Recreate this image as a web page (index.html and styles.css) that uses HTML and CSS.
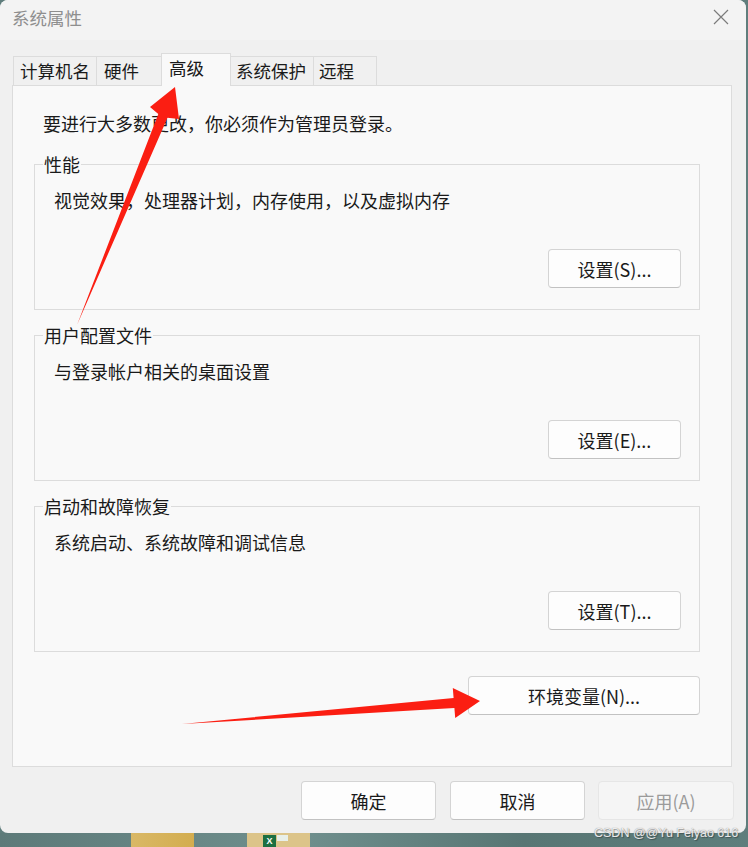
FILE: index.html
```html
<!DOCTYPE html>
<html lang="zh-CN">
<head>
<meta charset="utf-8">
<title>系统属性</title>
<link rel="stylesheet" href="styles.css">
</head>
<body>
<div class="window">
  <div class="titlebar">
    <span class="title">系统属性</span>
    <svg class="close" width="16" height="16" viewBox="0 0 16 16"><path d="M1 1 L15 15 M15 1 L1 15" stroke="#7b7b7b" stroke-width="1.2" fill="none"/></svg>
  </div>
  <div class="content">
    <div class="tabs">
      <div class="tab t1">计算机名</div>
      <div class="tab t2">硬件</div>
      <div class="tab t3 active">高级</div>
      <div class="tab t4">系统保护</div>
      <div class="tab t5">远程</div>
    </div>
    <div class="panel">
      <p class="intro">要进行大多数更改，你必须作为管理员登录。</p>
      <fieldset class="group">
        <legend>性能</legend>
        <p class="desc">视觉效果，处理器计划，内存使用，以及虚拟内存</p>
        <div class="row"><button class="btn set">设置(S)...</button></div>
      </fieldset>
      <fieldset class="group">
        <legend>用户配置文件</legend>
        <p class="desc">与登录帐户相关的桌面设置</p>
        <div class="row"><button class="btn set">设置(E)...</button></div>
      </fieldset>
      <fieldset class="group">
        <legend>启动和故障恢复</legend>
        <p class="desc">系统启动、系统故障和调试信息</p>
        <div class="row"><button class="btn set">设置(T)...</button></div>
      </fieldset>
      <div class="envrow"><button class="btn env">环境变量(N)...</button></div>
    </div>
    <div class="footer">
      <button class="btn foot">确定</button>
      <button class="btn foot">取消</button>
      <button class="btn foot disabled">应用(A)</button>
    </div>
  </div>
</div>
<div class="desktop">
  <div class="folder f1"></div>
  <div class="folder f2"><span class="xl">X</span><span class="sheet"></span></div>
</div>
<div class="watermark">CSDN @@Yu Feiyao 616</div>
<svg class="arrows" width="748" height="847" viewBox="0 0 748 847">
  <polygon fill="#fb1e12" points="77,325 158.3,113.9 150,107 175,87 179,119 167.5,117.7"/>
  <polygon fill="#fb1e12" points="182,724 453.6,698 452.8,688 480,701 455.2,718 454.4,708"/>
</svg>
</body>
</html>
```

FILE: styles.css
```css
html, body {
  margin: 0;
  padding: 0;
}
body {
  width: 748px;
  height: 847px;
  overflow: hidden;
  position: relative;
  background: #5f7d7c;
  font-family: "Noto Sans CJK SC", "Noto Sans", sans-serif;
  font-size: 18px;
  color: #1a1a1a;
}
.window {
  width: 746px;
  height: 833px;
  background: #f0f0f0;
  border-radius: 8px;
  overflow: hidden;
  display: flex;
  flex-direction: column;
}
.titlebar {
  height: 40px;
  flex: none;
  background: #f3f3f3;
  display: flex;
  align-items: center;
  justify-content: space-between;
  padding: 0 17px 0 12px;
  box-sizing: border-box;
}
.title {
  color: #8e8e8e;
  font-size: 17.5px;
  line-height: 20px;
  margin-top: -4px;
}
.close {
  margin-top: -6px;
}
.content {
  padding: 13px 14px 0 12px;
  display: flex;
  flex-direction: column;
}
.tabs {
  display: flex;
  align-items: flex-end;
  padding-left: 1px;
  height: 32px;
  position: relative;
  z-index: 1;
}
.tab {
  height: 29px;
  box-sizing: border-box;
  border: 1px solid #dcdcdc;
  border-bottom: none;
  border-right: none;
  background: #f0f0f0;
  line-height: 28px;
  white-space: nowrap;
  font-size: 17.5px;
}
.t1 { width: 83px; padding-left: 6px; }
.t2 { width: 65px; padding-left: 7px; }
.t3 { width: 70px; padding-left: 7px; }
.t4 { width: 82px; padding-left: 5px; }
.t5 { width: 64px; padding-left: 5px; border-right: 1px solid #dcdcdc; }
.tab.active {
  height: 33px;
  margin-bottom: -1px;
  background: #f9f9f9;
  border-right: 1px solid #dcdcdc;
  line-height: 28px;
}
.tab.active + .tab {
  border-left: none;
}
.panel {
  height: 682px;
  box-sizing: border-box;
  border: 1px solid #dcdcdc;
  background: #f9f9f9;
  padding: 25px 31px 0 21px;
}
.intro {
  margin: 0 0 17px 9px;
  line-height: 24px;
}
.group {
  margin: 0 0 13px 0;
  border: 1px solid #dcdcdc;
  padding: 0 18px 21px 8px;
  min-width: 0;
}
.group legend {
  padding: 0 1px;
  line-height: 24px;
}
.desc {
  margin: 12px 0 0 11px;
  line-height: 24px;
}
.row {
  display: flex;
  justify-content: flex-end;
  margin-top: 37px;
}
.btn {
  font-family: "Noto Sans CJK SC", "Noto Sans", sans-serif;
  font-size: 18px;
  color: #1a1a1a;
  background: #fdfdfd;
  border: 1px solid #d4d4d4;
  border-bottom-color: #c2c2c2;
  border-radius: 4px;
  padding: 0;
  box-sizing: border-box;
  line-height: 24px;
}
.set {
  width: 133px;
  height: 39px;
}
.envrow {
  display: flex;
  justify-content: flex-end;
  margin-top: 24px;
}
.env {
  width: 232px;
  height: 39px;
}
.footer {
  display: flex;
  justify-content: flex-end;
  gap: 14px;
  margin-top: 14px;
  margin-right: -2px;
}
.foot {
  width: 135px;
  height: 39px;
}
.foot.disabled {
  width: 136px;
  margin-left: -1px;
  background: #f5f5f5;
  border-color: #e6e6e6;
  color: #9b9b9b;
}
.desktop {
  height: 14px;
  display: flex;
  background: linear-gradient(90deg, #5d7a79 0%, #6f8f8d 40%, #587674 70%, #5e7e7c 100%);
}
.folder {
  height: 14px;
  background: #d9b65e;
}
.f1 {
  width: 63px;
  margin-left: 131px;
  background: linear-gradient(90deg, #d9b866, #d3ad4f);
}
.f2 {
  width: 63px;
  margin-left: 53px;
  position: relative;
  background: #dcc489;
}
.xl {
  position: absolute;
  left: 16px;
  top: 2px;
  width: 13px;
  height: 12px;
  background: #1d6f42;
  color: #fff;
  font-size: 9px;
  line-height: 12px;
  text-align: center;
  font-family: "Liberation Sans", sans-serif;
  font-weight: bold;
}
.sheet {
  position: absolute;
  left: 30px;
  top: 2px;
  width: 11px;
  height: 6px;
  background: #e8efe9;
}
.watermark {
  position: absolute;
  left: 594px;
  top: 826px;
  font-family: "Liberation Sans", sans-serif;
  font-size: 12.5px;
  color: rgba(255, 255, 255, 0.85);
  text-shadow: 0 0 1px #777, 1px 1px 1px rgba(0, 0, 0, 0.35);
  white-space: nowrap;
}
.arrows {
  position: absolute;
  left: 0;
  top: 0;
  pointer-events: none;
}
```
